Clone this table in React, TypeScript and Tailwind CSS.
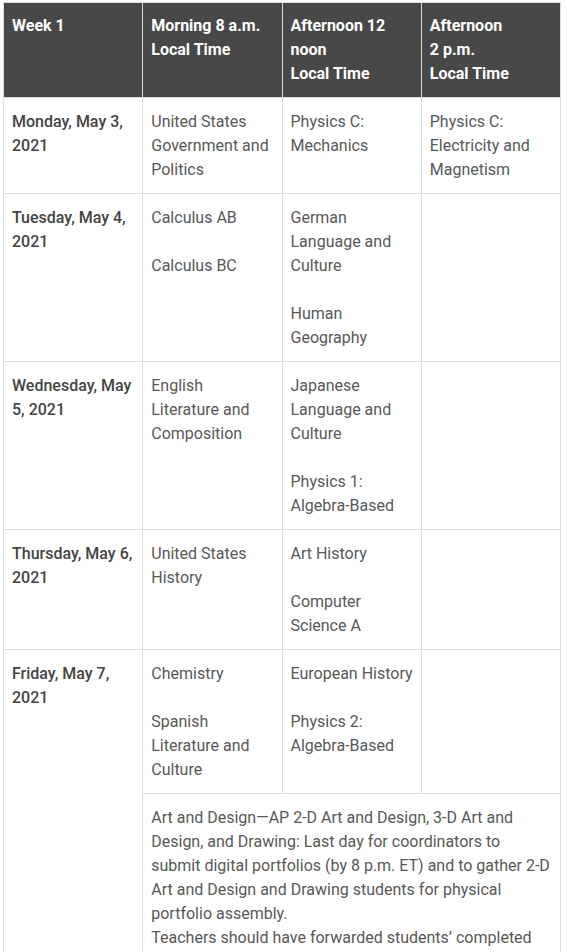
import React from 'react';

interface DayRow {
  day: string;
  morning: string[];
  noon: string[];
  afternoon: string[];
}

const rows: DayRow[] = [
  {
    day: 'Monday, May 3, 2021',
    morning: ['United States Government and Politics'],
    noon: ['Physics C: Mechanics'],
    afternoon: ['Physics C: Electricity and Magnetism'],
  },
  {
    day: 'Tuesday, May 4, 2021',
    morning: ['Calculus AB', 'Calculus BC'],
    noon: ['German Language and Culture', 'Human Geography'],
    afternoon: [],
  },
  {
    day: 'Wednesday, May 5, 2021',
    morning: ['English Literature and Composition'],
    noon: ['Japanese Language and Culture', 'Physics 1: Algebra-Based'],
    afternoon: [],
  },
  {
    day: 'Thursday, May 6, 2021',
    morning: ['United States History'],
    noon: ['Art History', 'Computer Science A'],
    afternoon: [],
  },
];

const cell = 'border border-[#dddddd] align-top px-2 pt-3 pb-[11px]';

const Exams = ({ items }: { items: string[] }) => (
  <>
    {items.map((t, i) => (
      <p key={i} className={i < items.length - 1 ? 'mb-6' : ''}>
        {t}
      </p>
    ))}
  </>
);

export default function App() {
  return (
    <div className="bg-white min-h-screen pl-[3px] pt-[2px] font-['Roboto',sans-serif] text-[16px] leading-[24px]">
      <table className="w-[558px] table-fixed border-collapse border border-[#dddddd]">
        <thead>
          <tr className="bg-[#484848] text-white font-bold">
            <th className="border border-[#dddddd] align-top text-left px-2 pt-[11px] pb-[11px]">Week 1</th>
            <th className="border border-[#dddddd] align-top text-left px-2 pt-[11px] pb-[11px]">
              Morning 8 a.m.
              <br />
              Local Time
            </th>
            <th className="border border-[#dddddd] align-top text-left px-2 pt-[11px] pb-[11px]">
              Afternoon 12 noon
              <br />
              Local Time
            </th>
            <th className="border border-[#dddddd] align-top text-left px-2 pt-[11px] pb-[11px]">
              Afternoon
              <br />
              2 p.m.
              <br />
              Local Time
            </th>
          </tr>
        </thead>
        <tbody className="text-[#585858]">
          {rows.map((r) => (
            <tr key={r.day}>
              <td className={`${cell} font-medium text-[#444444]`}>{r.day}</td>
              <td className={cell}>
                <Exams items={r.morning} />
              </td>
              <td className={cell}>
                <Exams items={r.noon} />
              </td>
              <td className={cell}>
                <Exams items={r.afternoon} />
              </td>
            </tr>
          ))}
          <tr>
            <td rowSpan={2} className={`${cell} font-medium text-[#444444]`}>
              Friday, May 7, 2021
            </td>
            <td className={cell}>
              <Exams items={['Chemistry', 'Spanish Literature and Culture']} />
            </td>
            <td className={cell}>
              <Exams items={['European History', 'Physics 2: Algebra-Based']} />
            </td>
            <td className={cell}></td>
          </tr>
          <tr>
            <td colSpan={3} className="border border-[#dddddd] align-top px-2 pt-3 pb-3">
              Art and Design—AP 2-D Art and Design, 3-D Art and Design, and Drawing: Last day for coordinators to
              submit digital portfolios (by 8 p.m. ET) and to gather 2-D Art and Design and Drawing students for
              physical portfolio assembly.
              <br />
              Teachers should have forwarded students’ completed portfolios to their coordinators by this date.
            </td>
          </tr>
        </tbody>
      </table>
    </div>
  );
}
